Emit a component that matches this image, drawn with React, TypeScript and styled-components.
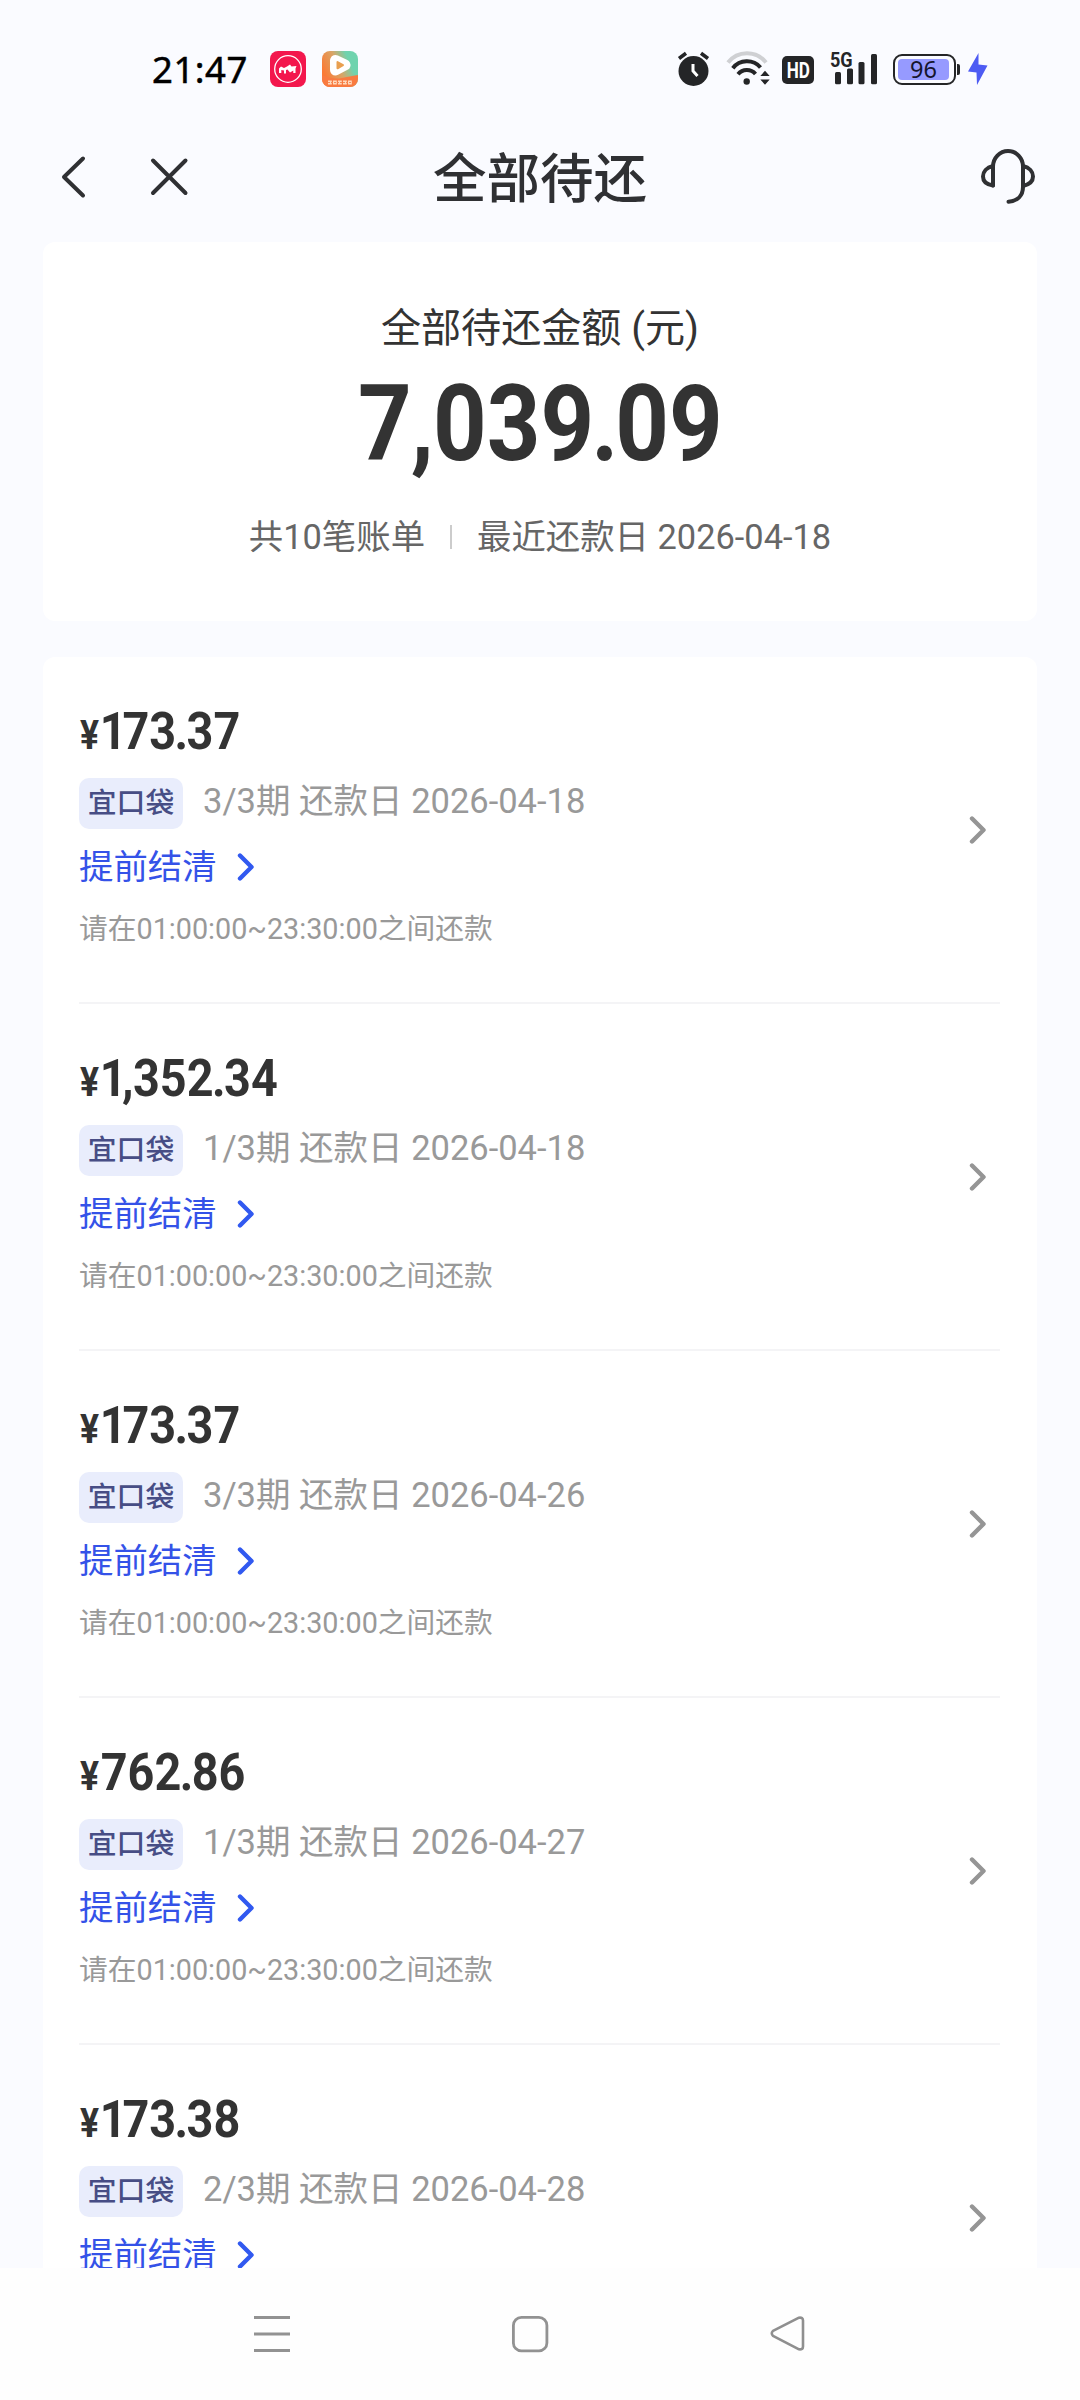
import React from "react";
import styled, { createGlobalStyle } from "styled-components";

const GlobalStyle = createGlobalStyle`
  * { box-sizing: border-box; }
  body {
    margin: 0;
    background: #fafbff;
    font-family: Roboto, "Noto Sans CJK SC", sans-serif;
    color: #333;
  }
  svg { display: block; flex: none; }
`;

const Screen = styled.div`
  width: 1080px;
  height: 2400px;
  display: flex;
  flex-direction: column;
  overflow: hidden;
  background: #fafbff;
`;

const StatusBar = styled.div`
  height: 112px;
  flex: none;
  display: flex;
  align-items: flex-start;
  justify-content: space-between;
  padding: 50px 92px 0 152px;
`;

const StatusGroup = styled.div`
  display: flex;
  align-items: flex-start;
`;

const Clock = styled.span`
  width: 118px;
  height: 38px;
  line-height: 38px;
  font-family: "Noto Sans", sans-serif;
  font-size: 36.5px;
  font-weight: 400;
  letter-spacing: 0.5px;
  -webkit-text-stroke: 0.5px #000;
  color: #000;
`;

const AppIcon = styled.div`
  margin: 1px 16px 0 0;
`;

const TitleBar = styled.header`
  height: 130px;
  flex: none;
  display: grid;
  grid-template-columns: 1fr auto 1fr;
  align-items: start;
  padding: 0 44px 0 60px;
`;

const TitleActions = styled.div`
  display: flex;
  gap: 60px;
  padding-top: 43px;
`;

const Title = styled.h1`
  margin: 28px 0 0 -16px;
  font-size: 53.5px;
  line-height: 80px;
  font-weight: 500;
  color: #2f3033;
`;

const Support = styled.div`
  justify-self: end;
  padding-top: 35px;
`;

const Content = styled.main`
  flex: 1;
  min-height: 0;
  overflow: hidden;
  padding: 0 43px;
  display: flex;
  flex-direction: column;
  gap: 36px;
`;

const Card = styled.section`
  background: #fff;
  border-radius: 12px;
  flex: none;
`;

const Summary = styled(Card)`
  height: 379px;
  display: flex;
  flex-direction: column;
  align-items: center;
  padding-top: 62px;
`;

const SummaryLabel = styled.div`
  font-size: 40.1px;
  line-height: 50px;
  white-space: pre;
`;

const Total = styled.div`
  margin-top: 10px;
  height: 120px;
  line-height: 120px;
  font-size: 105.5px;
  font-weight: 700;
  transform: scaleX(0.888);
  white-space: nowrap;
`;

/* Trims the side bearings of the narrow glyphs so figures set tightly. */
const Narrow = styled.span<{ $before: number; $after: number }>`
  margin-left: ${(p) => -p.$before}em;
  letter-spacing: ${(p) => -p.$after}em;
`;

const SummaryMeta = styled.div`
  margin-top: 28px;
  display: flex;
  align-items: center;
  font-size: 34.4px;
  line-height: 50px;
  color: #666;
`;

const MetaDivider = styled.i`
  width: 2px;
  height: 24px;
  margin: 0 25px;
  background: #ccc;
`;

const BillRow = styled.div`
  height: 347px;
  margin: 0 37px 0 36px;
  padding: 44px 13px 0 0;
  display: flex;
  justify-content: space-between;
  border-bottom: 2px solid #f4f4f6;
`;

const BillBody = styled.div`
  display: flex;
  flex-direction: column;
  align-items: flex-start;
`;

const Amount = styled.div`
  height: 60px;
  line-height: 60px;
  font-size: 52.7px;
  font-weight: 700;
  transform: scaleX(0.888);
  transform-origin: 0 50%;
  white-space: nowrap;
`;

const Yen = styled.span`
  font-size: 40px;
  letter-spacing: 2px;
  margin-left: 1px;
`;

const BillMeta = styled.div`
  margin-top: 17px;
  height: 51px;
  display: flex;
  gap: 20px;
`;

const Tag = styled.span`
  height: 51px;
  width: 104px;
  line-height: 51px;
  text-align: center;
  border-radius: 10px;
  background: #e9edfc;
  color: #474d85;
  font-size: 28.8px;
  font-weight: 500;
`;

const Term = styled.span`
  font-size: 34.5px;
  line-height: 46px;
  color: #999;
  white-space: nowrap;
`;

const SettleLink = styled.a`
  margin-top: 18px;
  height: 40px;
  line-height: 40px;
  display: flex;
  align-items: center;
  gap: 20px;
  font-size: 34.4px;
  color: #3452e8;
`;

const Note = styled.div`
  margin-top: 22px;
  height: 40px;
  line-height: 40px;
  font-size: 28.75px;
  color: #999;
`;

const RowArrow = styled.div`
  padding-top: 114px;
`;

const NavBar = styled.nav`
  height: 132px;
  flex: none;
  background: #fefefe;
  display: flex;
  align-items: flex-start;
  justify-content: space-between;
  padding: 47px 274px 0 253px;
`;

const Chevron = ({ color }: { color: string }) => (
  <svg width="18" height="30" viewBox="0 0 18 30" fill="none">
    <path d="M3 3.5L14.5 15L3 26.5" stroke={color} strokeWidth="4.4" strokeLinecap="round" strokeLinejoin="round" />
  </svg>
);

const HorseAppIcon = () => (
  <svg width="36" height="36" viewBox="0 0 36 36" fill="none">
    <rect width="36" height="36" rx="8" fill="#f3174d" />
    <circle cx="18" cy="18" r="13.3" stroke="#fff" strokeWidth="1.3" />
    <path d="M9 22V17.5L11 15.5L14 17L17 15.500L20 13.500L21.500 15.500L26.500 15L25.500 17.500V22H23.300V19.500L20 21.500L17.500 18.500L16 19V22.500H14V19.500L11.300 19V22Z" fill="#fff" />
  </svg>
);

const VideoAppIcon = () => (
  <svg width="36" height="36" viewBox="0 0 36 36" fill="none">
    <defs>
      <linearGradient id="video-bg" x1="2" y1="22" x2="34" y2="8" gradientUnits="userSpaceOnUse">
        <stop stopColor="#fb7a35" />
        <stop offset="0.45" stopColor="#d9a566" />
        <stop offset="0.8" stopColor="#6fd3ae" />
      </linearGradient>
      <clipPath id="video-clip"><rect width="36" height="36" rx="8" /></clipPath>
    </defs>
    <g clipPath="url(#video-clip)">
      <rect width="36" height="36" fill="url(#video-bg)" />
      <path d="M0 24Q10 29 20 27T36 24V36H0Z" fill="#f97a40" />
      <path d="M13.500 9.500V19L23 14Z" fill="#fff" stroke="#fff" strokeWidth="11" strokeLinejoin="round" />
      <path d="M15.500 11V17.300L21 14.100Z" fill="#e9a050" stroke="#e9a050" strokeWidth="2" strokeLinejoin="round" />
      <path d="M6 31.5H30" stroke="#ffd9bd" strokeWidth="4" strokeDasharray="3.8 1.2" />
      <path d="M6 31.5H30" stroke="#f58b55" strokeWidth="1" strokeDasharray="2 1" />
    </g>
  </svg>
);

const AlarmIcon = () => (
  <svg width="33" height="38" viewBox="0 0 33 38" fill="none">
    <circle cx="16.5" cy="21" r="15" fill="#242527" />
    <path d="M2 8.5L9 3.3M31 8.5L24 3.3" stroke="#242527" strokeWidth="3.6" />
    <path d="M16 14V21L20.5 26" stroke="#fff" strokeWidth="3" />
  </svg>
);

const WifiIcon = () => (
  <svg width="46" height="38" viewBox="0 0 46 38" fill="none">
    <path d="M3 12.5A24 24 0 0 1 41 12.5" stroke="#cfd0d3" strokeWidth="4" />
    <path d="M7.8 18.2A18 18 0 0 1 35.5 17.5" stroke="#242527" strokeWidth="4" />
    <path d="M13 24.2A11.5 11.5 0 0 1 30.5 24" stroke="#242527" strokeWidth="4" />
    <circle cx="21.7" cy="31.5" r="3.2" fill="#242527" />
    <path d="M35.3 26L40 20.8L44.7 26ZM35.3 29.5L40 34.7L44.7 29.5Z" fill="#242527" />
  </svg>
);

const HdBadge = styled.span`
  width: 32px;
  height: 28px;
  margin: 6px 16px 0 11px;
  border-radius: 5px;
  background: #242527;
  color: #fff;
  display: flex;
  align-items: center;
  justify-content: center;
`;

const HdLabel = styled.span`
  font-size: 22.5px;
  line-height: 28px;
  font-weight: 700;
  transform: scaleX(0.76);
`;

const Signal = styled.span`
  position: relative;
  width: 48px;
  height: 36px;
`;

const SignalLabel = styled.span`
  position: absolute;
  left: 0;
  top: 1px;
  font-size: 20.5px;
  line-height: 18px;
  font-weight: 700;
  color: #242527;
  transform: scaleX(0.88);
  transform-origin: 0 50%;
`;

const Battery = styled.span`
  width: 63px;
  height: 31px;
  margin: 4px 1px 0 15px;
  padding: 3px;
  border: 2px solid #242527;
  border-radius: 9px;
  display: flex;
`;

const BatteryFill = styled.span`
  width: 51px;
  height: 21px;
  border-radius: 4px;
  background: #969aff;
  color: #15152e;
  display: flex;
  align-items: center;
  justify-content: center;
  font-family: "Noto Sans", sans-serif;
  font-size: 23.5px;
  line-height: 21px;
  font-weight: 400;
`;

const BatteryTip = styled.i`
  width: 3px;
  height: 11px;
  margin: 14px 7px 0 0;
  border-radius: 0 2px 2px 0;
  background: #242527;
`;

const SignalIcon = () => (
  <Signal>
    <svg width="48" height="36" viewBox="0 0 48 36" fill="#242527">
      <rect x="5" y="22" width="6" height="12.3" rx="1.5" />
      <rect x="17" y="18.5" width="6" height="15.8" rx="1.5" />
      <rect x="28.5" y="12" width="6" height="22.3" rx="1.5" />
      <rect x="41" y="4" width="6" height="30.3" rx="1.5" />
    </svg>
    <SignalLabel>5G</SignalLabel>
  </Signal>
);

interface Bill {
  amount: string;
  term: string;
  due: string;
}

const bills: Bill[] = [
  { amount: "173.37", term: "3/3期", due: "2026-04-18" },
  { amount: "1,352.34", term: "1/3期", due: "2026-04-18" },
  { amount: "173.37", term: "3/3期", due: "2026-04-26" },
  { amount: "762.86", term: "1/3期", due: "2026-04-27" },
  { amount: "173.38", term: "2/3期", due: "2026-04-28" },
];

const trims: Record<string, [number, number]> = {
  "1": [0.02, 0.09],
  ",": [0.01, 0.01],
  ".": [0.033, 0.033],
};

const Figures = ({ value }: { value: string }) => (
  <>
    {value.split(/([1,.])/).filter(Boolean).map((part, i) =>
      trims[part] ? (
        <Narrow key={i} $before={trims[part][0]} $after={trims[part][1]}>{part}</Narrow>
      ) : (
        part
      )
    )}
  </>
);

const BillItem = ({ amount, term, due }: Bill) => (
  <BillRow>
    <BillBody>
      <Amount><Yen>¥</Yen><Figures value={amount} /></Amount>
      <BillMeta>
        <Tag>宜口袋</Tag>
        <Term>{term} 还款日 {due}</Term>
      </BillMeta>
      <SettleLink>提前结清<Chevron color="#3159f0" /></SettleLink>
      <Note>请在01:00:00~23:30:00之间还款</Note>
    </BillBody>
    <RowArrow><Chevron color="#959595" /></RowArrow>
  </BillRow>
);

export default function App() {
  return (
    <Screen>
      <GlobalStyle />
      <StatusBar>
        <StatusGroup>
          <Clock>21:47</Clock>
          <AppIcon><HorseAppIcon /></AppIcon>
          <AppIcon><VideoAppIcon /></AppIcon>
        </StatusGroup>
        <StatusGroup>
          <AlarmIcon />
          <svg width="15" height="1" />
          <WifiIcon />
          <HdBadge><HdLabel>HD</HdLabel></HdBadge>
          <SignalIcon />
          <Battery><BatteryFill>96</BatteryFill></Battery>
          <BatteryTip />
          <svg width="21" height="38" viewBox="0 0 21 38">
            <path d="M11.5 3L1 21.5L9.5 22.5L10 35L20.5 15.5L11.5 14.5Z" fill="#4d5bf3" />
          </svg>
        </StatusGroup>
      </StatusBar>

      <TitleBar>
        <TitleActions>
          <svg width="28" height="44" viewBox="0 0 28 44" fill="none">
            <path d="M23 3.5L4 22L23 40.5" stroke="#2f3033" strokeWidth="4" strokeLinecap="round" strokeLinejoin="round" />
          </svg>
          <svg width="42" height="44" viewBox="0 0 42 44" fill="none">
            <path d="M5 5.5L37.5 38M37.5 5.5L5 38" stroke="#2f3033" strokeWidth="4" strokeLinecap="round" />
          </svg>
        </TitleActions>
        <Title>全部待还</Title>
        <Support>
          <svg width="58" height="58" viewBox="0 0 58 58" fill="none" stroke="#2f3033" strokeWidth="4" strokeLinecap="round" strokeLinejoin="round">
            <path d="M15 38.5V19.5A15 15.5 0 0 1 45 19.5V40C45 48.5 39.5 54 30.5 54.8" />
            <path d="M15 19C8.5 20.5 5 25 5 29.5S8.500 37.500 15 38.500" />
            <path d="M45 19C51.500 20.500 55 25 55 29.500S51.500 37.500 45 39" />
          </svg>
        </Support>
      </TitleBar>

      <Content>
        <Summary>
          <SummaryLabel>全部待还金额 (元)</SummaryLabel>
          <Total><Figures value="7,039.09" /></Total>
          <SummaryMeta>
            <span>共10笔账单</span>
            <MetaDivider />
            <span>最近还款日 2026-04-18</span>
          </SummaryMeta>
        </Summary>
        <Card>
          {bills.map((bill, i) => (
            <BillItem key={i} {...bill} />
          ))}
        </Card>
      </Content>

      <NavBar>
        <svg width="38" height="38" viewBox="0 0 38 38" stroke="#929292" strokeWidth="3">
          <path d="M1 2.500H37M1 19H37M1 35.500H37" />
        </svg>
        <svg width="38" height="38" viewBox="0 0 38 38" fill="none" stroke="#929292" strokeWidth="2.800">
          <rect x="2.400" y="2.400" width="33.500" height="33.500" rx="8" />
        </svg>
        <svg width="37" height="38" viewBox="0 0 37 38" fill="none" stroke="#8f8f8f" strokeWidth="2.600" strokeLinejoin="round">
          <path d="M30 2.700L4 15.800Q1.500 18.300 4 20.800L30 34.300Q34 34.800 34 31.500V5.500Q34 2.200 30 2.700Z" />
        </svg>
      </NavBar>
    </Screen>
  );
}
